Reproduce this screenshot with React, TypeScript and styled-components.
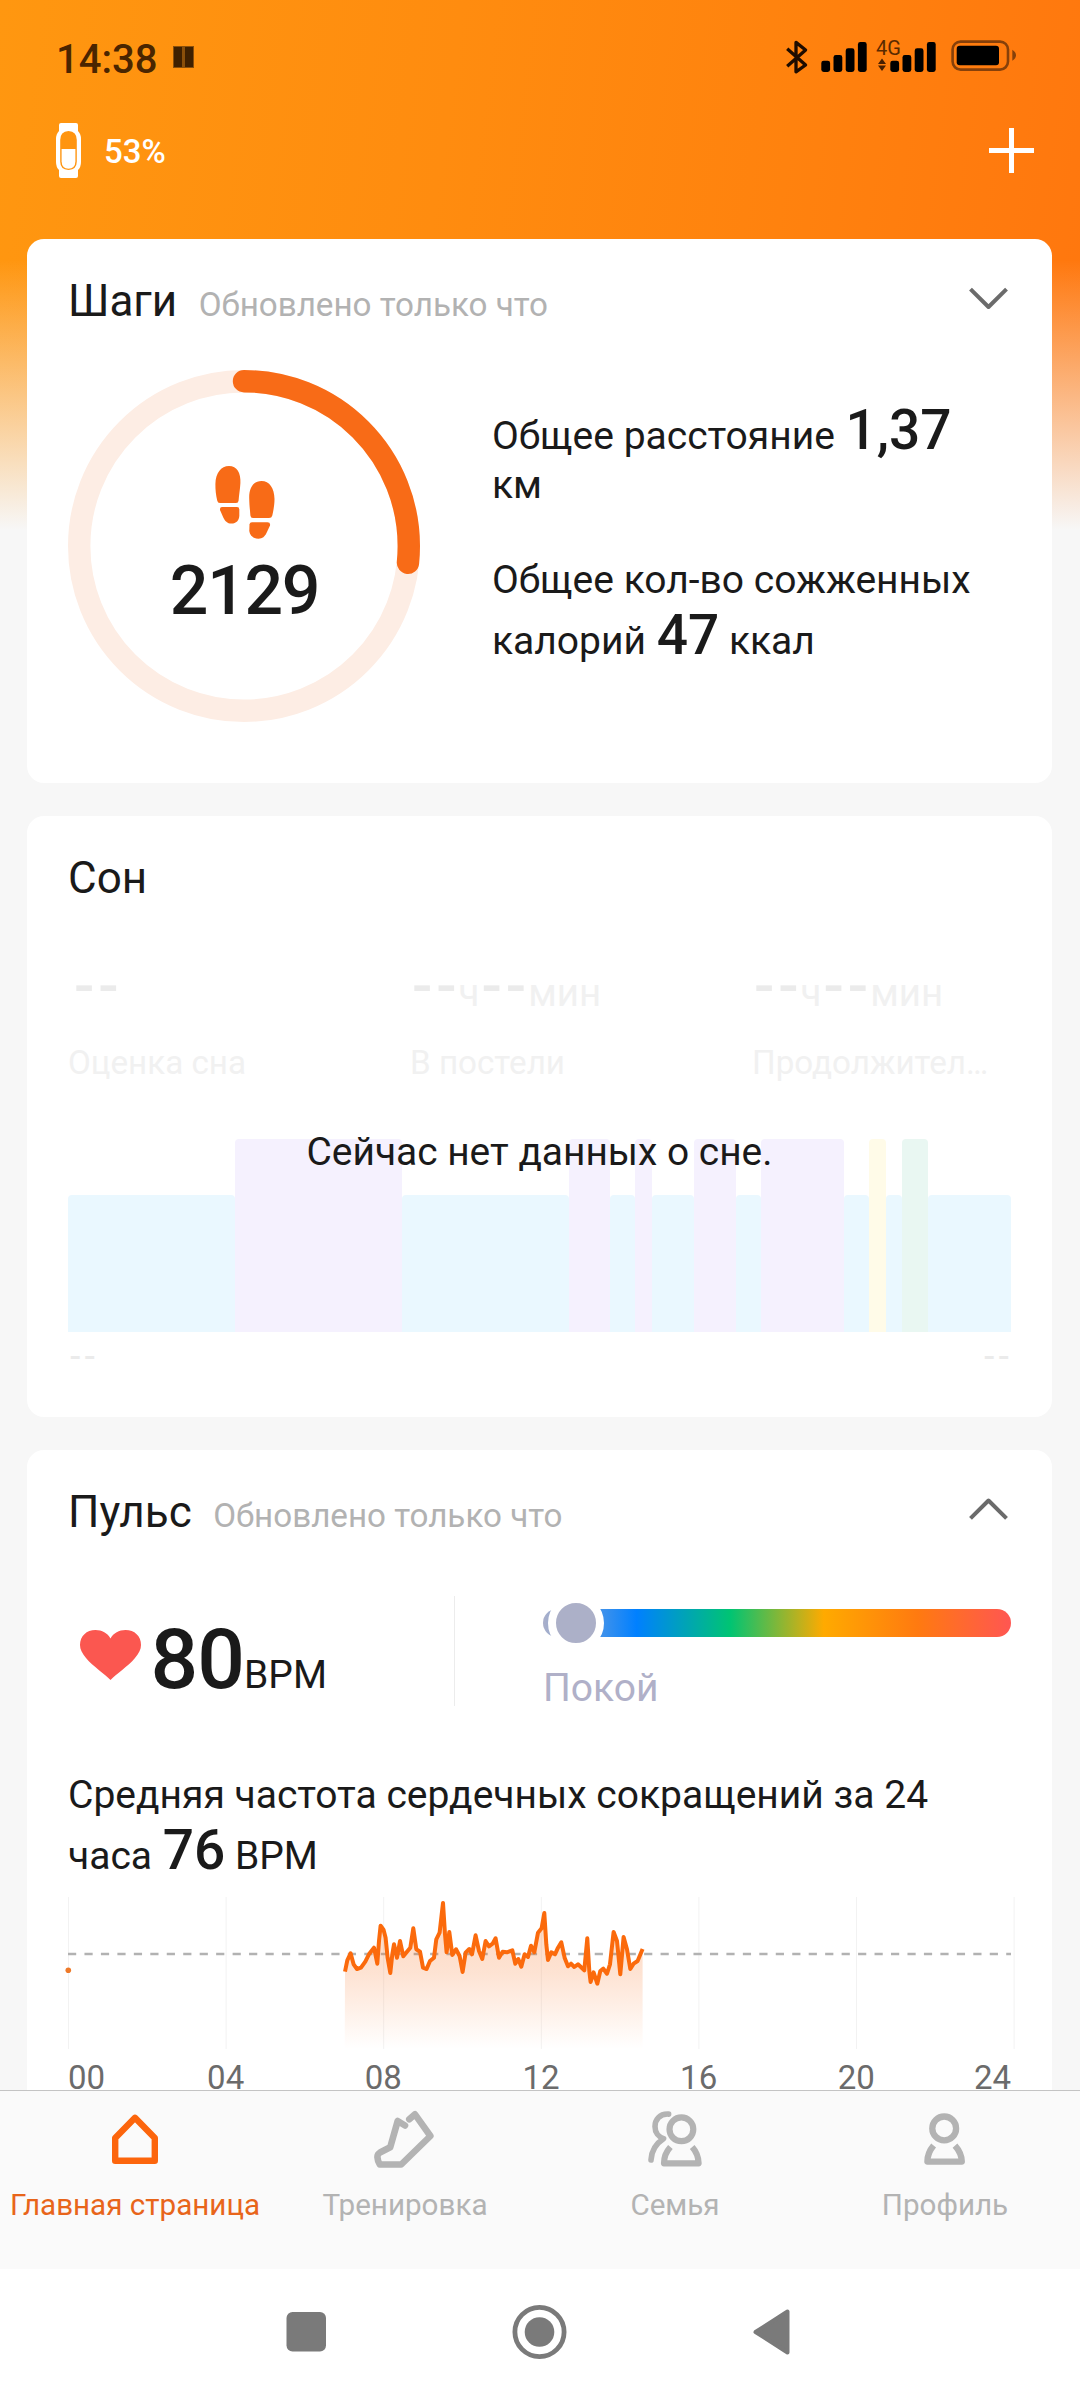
import React from 'react';
import styled, { createGlobalStyle } from 'styled-components';

const GlobalStyle = createGlobalStyle`
  *, *::before, *::after { box-sizing: border-box; }
  body { margin: 0; background: #f7f7f7; }
  svg { display: block; flex: none; overflow: visible; }
`;

const Screen = styled.div`
  width: 1080px;
  height: 2400px;
  display: flex;
  flex-direction: column;
  overflow: hidden;
  font-family: Roboto, 'Noto Sans', sans-serif;
  color: #1a1a1a;
  background:
    linear-gradient(180deg, rgba(247, 247, 247, 0) 260px, #f7f7f7 530px),
    linear-gradient(98deg, #ff9710 0, #ff8c0f 40%, #ff820e 70%, #ff760e 100%) 0 0 / 1080px 540px no-repeat;
`;

const StatusBar = styled.header`
  height: 116px;
  flex: none;
  display: flex;
  align-items: center;
  padding: 0 63px 0 56px;
`;

const Clock = styled.span`
  padding-top: 3px;
  font-size: 40px;
  font-weight: 500;
  line-height: 48px;
  color: #4a2500;
`;

const PauseMark = styled.div`
  display: flex;
  gap: 3px;
  margin: 0 0 2px 16px;
  padding: 1px;
  background: #8a4f0a;
`;

const PauseBar = styled.i`
  width: 8px;
  height: 20px;
  background: #3f2000;
`;

const StatusIcons = styled.div`
  display: flex;
  margin-left: auto;
`;

const BluetoothSlot = styled.div`
  margin-right: 13px;
`;

const Network = styled.div`
  position: relative;
  margin: 0 15px 0 9px;
`;

const NetworkType = styled.span`
  position: absolute;
  left: 0;
  top: -2px;
  font-size: 20px;
  line-height: 24px;
  font-weight: 400;
  color: #5a2a00;
`;

const ArrowSlot = styled.div`
  position: absolute;
  left: 1.5px;
  top: 20px;
`;

const DeviceBar = styled.div`
  height: 123px;
  flex: none;
  display: flex;
  align-items: center;
  justify-content: space-between;
  padding: 0 46px 54px 56px;
`;

const Device = styled.div`
  display: flex;
  align-items: center;
  gap: 23px;
  color: #fff;
`;

const DeviceCharge = styled.span`
  padding-top: 3px;
  font-size: 33px;
  font-weight: 500;
  line-height: 40px;
`;

const Feed = styled.main`
  flex: 1;
  min-height: 0;
  display: flex;
  flex-direction: column;
  gap: 33px;
  padding: 0 28px 0 27px;
`;

const Card = styled.section<{ $height: number; $flush?: boolean }>`
  flex: none;
  height: ${(p) => p.$height}px;
  padding: 32px 41px 0;
  border-radius: ${(p) => (p.$flush ? '17px 17px 0 0' : '17px')};
  background: #fff;
`;

const CardHeader = styled.div`
  height: 60px;
  display: flex;
  align-items: baseline;
  line-height: 60px;
`;

const CardTitle = styled.h2`
  margin: 0;
  font-size: 44px;
  font-weight: 400;
`;

const CardNote = styled.span`
  margin-left: 21.5px;
  font-size: 33.2px;
  color: #b2b2b2;
`;

const ChevronSlot = styled.div`
  align-self: flex-start;
  margin: 15px 3px 0 auto;
`;

const StepsBody = styled.div`
  display: flex;
  margin-top: 39px;
  gap: 72px;
`;

const Ring = styled.div`
  display: grid;
  flex: none;
  width: 352px;
  height: 352px;
  > * { grid-area: 1 / 1; }
`;

const RingContent = styled.div`
  display: flex;
  flex-direction: column;
  align-items: center;
  padding: 96px 0 0 1px;
`;

const StepCount = styled.span`
  margin-top: 12px;
  font-size: 68px;
  font-weight: 500;
  line-height: 80px;
  letter-spacing: -1.3px;
`;

const Metrics = styled.div`
  display: flex;
  flex-direction: column;
  gap: 49px;
  width: 490px;
  padding-top: 28px;
`;

const Metric = styled.p<{ $top?: number; $width?: number }>`
  margin: ${(p) => p.$top ?? 0}px 0 0;
  max-width: ${(p) => p.$width ?? 490}px;
  font-size: 39px;
`;

const Strong = styled.b`
  margin-left: 1px;
  font-size: 55px;
  font-weight: 500;
`;

const SleepStats = styled.div`
  display: grid;
  grid-template-columns: 342px 342px 259px;
  margin-top: 53px;
`;

const SleepValue = styled.div<{ $inset: number }>`
  display: flex;
  align-items: baseline;
  height: 56px;
  padding-left: ${(p) => p.$inset}px;
  font-size: 38.5px;
  line-height: 50px;
  color: #f1f1f1;
`;

const Dash = styled.span<{ $cell: number; $size: number }>`
  width: ${(p) => p.$cell}px;
  display: inline-flex;
  justify-content: center;
  font-size: ${(p) => p.$size}px;
  font-weight: 500;
  color: #ebebeb;
`;

const SleepLabel = styled.div`
  width: 238px;
  margin-top: 24px;
  white-space: nowrap;
  font-size: 33.2px;
  line-height: 44px;
  color: #f1f1f1;
`;

const SleepChart = styled.div`
  position: relative;
  display: flex;
  align-items: flex-end;
  height: 193px;
  margin-top: 54px;
`;

const SleepBar = styled.div<{ $units: number; $tone: string; $low: boolean }>`
  flex: ${(p) => p.$units} 0 0;
  height: ${(p) => (p.$low ? 137 : 193)}px;
  border-radius: 4px 4px 0 0;
  background: ${(p) => p.$tone};
`;

const SleepEmpty = styled.div`
  position: absolute;
  left: 0;
  right: 0;
  top: -13px;
  text-align: center;
  font-size: 38.9px;
  line-height: 52px;
`;

const SleepRange = styled.div`
  display: flex;
  justify-content: space-between;
  margin-top: 9px;
  line-height: 30px;
`;

const PulseRow = styled.div`
  display: flex;
  height: 110px;
  margin-top: 54px;
`;

const PulseNow = styled.div`
  display: flex;
  align-items: baseline;
  width: 387px;
  height: 110px;
  padding-left: 11.5px;
  border-right: 1px solid #ececec;
  font-size: 39px;
  line-height: 127px;
`;

const HeartSlot = styled.div`
  align-self: flex-start;
  margin: 34px 10px 0 0;
`;

const PulseValue = styled.span`
  font-size: 84px;
  font-weight: 500;
  letter-spacing: -1px;
`;

const Zone = styled.div`
  width: 468px;
  margin-left: 88px;
  padding-top: 13px;
`;

const ZoneTrack = styled.div`
  position: relative;
  height: 28px;
  border-radius: 14px;
  background: linear-gradient(90deg, #abb0ca 0, #0080ff 20%, #00c473 40%, #ffaa00 60%, #ff7a10 80%, #ff5652 100%);
`;

const ZoneKnob = styled.div`
  position: absolute;
  left: 5px;
  top: -14px;
  width: 56px;
  height: 56px;
  border: 8px solid #fff;
  border-radius: 50%;
  background: #acb0c8;
`;

const ZoneName = styled.div`
  margin-top: 26px;
  font-size: 39px;
  line-height: 50px;
  color: #b0b0c8;
`;

const PulseChart = styled.div`
  margin-top: 15px;
`;

const HourAxis = styled.div`
  display: grid;
  grid-template-columns: 1fr repeat(5, 2fr) 1fr;
  width: 946px;
  margin-top: 15.5px;
  font-size: 33px;
  line-height: 26px;
  color: #6b6b6b;
`;

const Hour = styled.span<{ $edge?: 'left' | 'right' }>`
  text-align: ${(p) => p.$edge ?? 'center'};
  ${(p) => (p.$edge === 'right' ? 'padding-right: 3px;' : '')}
`;

const TabBar = styled.nav`
  flex: none;
  height: 179px;
  display: grid;
  grid-template-columns: repeat(4, 1fr);
  padding-top: 16px;
  border-top: 1px solid #c4c4c4;
  background: #fafafa;
`;

const Tab = styled.div<{ $active?: boolean }>`
  display: flex;
  flex-direction: column;
  align-items: center;
  gap: 16px;
  font-size: 29.6px;
  line-height: 36px;
  white-space: nowrap;
  color: ${(p) => (p.$active ? '#e8651a' : '#b3b3b3')};
`;

const SystemNav = styled.footer`
  flex: none;
  height: 131px;
  display: flex;
  align-items: center;
  padding: 0 290px 5px 286px;
  justify-content: space-between;
  background: #fff;
`;

const BAR_TOPS = [22.7, 17, 10.3, 4];

const SignalBars = ({ offset = 0 }: { offset?: number }) => (
  <svg width={46 + offset} height="40" fill="#000">
    {BAR_TOPS.map((y, i) => (
      <rect key={i} x={offset + 0.3 + i * 12.2} y={y} width="8.8" height={34 - y} rx="2.4" />
    ))}
  </svg>
);

const Bluetooth = () => (
  <svg width="22" height="40" fill="none" stroke="#1d0c00" strokeWidth="3.3" strokeLinejoin="round">
    <path d="M1.2 10.8 L19.6 27 L10 33.8 V4.4 L19.6 12 L1.2 28.2" />
  </svg>
);

const NetworkArrows = () => (
  <ArrowSlot>
    <svg width="8" height="14" fill="#4a2000">
      <path d="M4 0.5 L8 6 H0 Z M4 13 L8 7.5 H0 Z" />
    </svg>
  </ArrowSlot>
);

const Battery = () => (
  <svg width="66" height="40">
    <rect x="1.6" y="3.6" width="55.4" height="28" rx="8" fill="none" stroke="#86400a" strokeWidth="2.6" />
    <rect x="5.7" y="7.7" width="42.3" height="19.6" rx="3" fill="#000" />
    <path d="M61.3 11.7 Q65 14 65 17.2 Q65 20.5 61.3 22.7 Z" fill="#86400a" />
  </svg>
);

const Band = () => (
  <svg width="25" height="55">
    <path
      fill="#fff"
      fillRule="evenodd"
      d="M5 0 H20 Q22 0 22 2 V8 Q25 11 25 16 V39 Q25 44 22 47 V53 Q22 55 20 55 H5 Q3 55 3 53 V47 Q0 44 0 39 V16 Q0 11 3 8 V2 Q3 0 5 0 Z
         M12.5 8 Q4.2 8.6 4.2 17 V38.5 Q4.2 46.5 12.5 47 Q20.8 46.5 20.8 38.5 V17 Q20.8 8.6 12.5 8 Z"
    />
    <path fill="#fff" d="M5.6 26 H19.4 V38.5 Q19.2 45.4 12.5 45.8 Q5.8 45.4 5.6 38.5 Z" />
  </svg>
);

const Plus = () => (
  <svg width="45" height="45" stroke="#fff" strokeWidth="5">
    <path d="M22.5 0 V45 M0 22.5 H45" />
  </svg>
);

const Chevron = ({ up = false }: { up?: boolean }) => (
  <svg width="39" height="24" fill="none" stroke="#6b6b6b" strokeWidth="4">
    <path d={up ? 'M1.5 21.3 L19.5 3.5 L37.5 21.3' : 'M1.5 3.2 L19.5 21 L37.5 3.2'} strokeLinejoin="round" />
  </svg>
);

const RADIUS = 164.8;
const GOAL_SHARE = 2129 / 8000;

const ProgressRing = () => {
  const length = 2 * Math.PI * RADIUS;
  return (
    <svg width="352" height="352" fill="none" strokeWidth="22.4">
      <circle cx="176" cy="176" r={RADIUS} stroke="#fdede4" />
      <circle
        cx="176"
        cy="176"
        r={RADIUS}
        stroke="#f86b17"
        strokeLinecap="round"
        strokeDasharray={`${length * GOAL_SHARE} ${length}`}
        transform="rotate(-90 176 176)"
      />
    </svg>
  );
};

const Footprints = () => (
  <svg width="60" height="73" fill="#f86b17">
    <path d="M14 0 C22 0 26 7 25.4 17 C25 24 24 29 23.6 34.5 Q23.4 37 21 37 H5 Q2.6 37 2.2 34.5 C1 29 0.3 24 0.4 18 C0.6 7 6 0 14 0 Z" />
    <path d="M7 41 H22 Q24.3 41 24.3 43.4 V49.5 C24.3 54.5 21 57.6 16.5 57.6 C12 57.6 10 55 8.3 51.5 L5.2 44.5 Q4.3 41 7 41 Z" />
    <path d="M46.5 15 C38.5 15 34 22 34.2 32 C34.3 39 35 44 35.4 49.5 Q35.6 52 38 52 H54 Q56.7 52 57.3 49.5 C58.5 44 59.5 39 59.5 33 C59.3 22 54.5 15 46.5 15 Z" />
    <path d="M37 56.3 H52.5 Q55.6 56.3 55 59.5 L51.5 67 C49.8 70.5 47.5 72.7 43.5 72.7 C38.5 72.7 34.5 69.5 34.3 64.5 L34.5 58.5 Q34.7 56.3 37 56.3 Z" />
  </svg>
);

const Heart = () => (
  <svg width="61" height="50">
    <path
      fill="#fb5750"
      d="M30.5 50 C25 44 13 36.5 6 28 C2 23 0 19.5 0 15 C0 6 6.5 0 15.5 0 C22 0 27.5 3 30.5 8.5 C33.5 3 39 0 45.5 0 C54.5 0 61 6 61 15 C61 19.5 59 23 55 28 C48 36.5 36 44 30.5 50 Z"
    />
  </svg>
);

/* Heart rate samples in thirds of a pixel; HeartRateChart shifts them onto the 24 h grid */
const SAMPLES: [number, number][] = [
  [134, 272], [141, 238], [151, 217], [160, 250], [170, 264], [182, 260], [195, 242], [207, 218], [221, 200],
  [231, 248], [236, 180], [241, 134], [250, 147], [256, 170], [262, 230], [270, 276], [276, 220], [281, 190],
  [290, 230], [299, 180], [309, 226], [322, 210], [330, 200], [339, 142], [348, 205], [359, 212], [368, 260],
  [379, 264], [389, 240], [401, 230], [408, 175], [418, 155], [428, 66], [434, 160], [439, 214], [447, 153],
  [456, 222], [467, 205], [478, 225], [487, 273], [496, 215], [507, 204], [515, 220], [526, 163], [536, 210],
  [546, 234], [556, 180], [566, 196], [577, 188], [586, 172], [596, 230], [607, 212], [620, 214], [636, 208],
  [645, 248], [654, 234], [663, 257], [673, 220], [683, 228], [692, 194], [702, 214], [713, 155], [724, 142],
  [732, 96], [738, 190], [743, 237], [753, 214], [764, 220], [773, 200], [783, 184], [793, 230], [803, 256],
  [812, 248], [822, 258], [833, 250], [852, 268], [861, 172], [867, 270], [871, 303], [880, 274], [891, 308],
  [900, 270], [909, 263], [920, 278], [929, 250], [940, 153], [950, 180], [960, 280], [970, 168], [980, 205],
  [990, 264], [1000, 248], [1012, 240], [1027, 204],
];

const HeartRateChart = () => {
  const line = SAMPLES.map(([x, y]) => `${(x / 3 + 232.3).toFixed(1)} ${(y / 3 - 16).toFixed(1)}`).join(' L');
  return (
    <svg width="943" height="152" fill="none">
      <defs>
        <linearGradient id="pulseFill" x1="0" y1="0" x2="0" y2="152" gradientUnits="userSpaceOnUse">
          <stop offset="0" stopColor="#f86b17" stopOpacity="0.3" />
          <stop offset="0.5" stopColor="#f86b17" stopOpacity="0.19" />
          <stop offset="1" stopColor="#f86b17" stopOpacity="0" />
        </linearGradient>
      </defs>
      {[0, 1, 2, 3, 4, 5, 6].map((i) => (
        <path key={i} d={`M${0.5 + i * 157.6} 0 V152`} stroke="#f2f2f2" />
      ))}
      <path d="M0 57 H943" stroke="#b2b2b2" strokeWidth="2.6" strokeDasharray="8.2 8.26" />
      <path d={`M${line} V152 H276.7 Z`} fill="url(#pulseFill)" />
      <path d={`M${line}`} stroke="#fb6a0c" strokeWidth="4" strokeLinejoin="round" />
      <circle cx="0.3" cy="73.3" r="2.8" fill="#ee7a2a" />
    </svg>
  );
};

const HomeIcon = () => (
  <svg width="64" height="64" fill="none" stroke="#fc650c" strokeWidth="6.4" strokeLinejoin="round">
    <path d="M12.2 31 L32 10.8 L51.8 31 V53.7 H12.2 Z" />
  </svg>
);

const ShoeIcon = () => (
  <svg width="64" height="64" fill="none" stroke="#b3b3b3" strokeWidth="6.6" strokeLinejoin="round" strokeLinecap="round">
    <path d="M32 18.5 L24.7 14 L17.2 40.3 L7 45.5 Q4.4 47 4.4 50 Q4.6 54 6.8 57.5 H28.2 L57.4 29 L42 7.3 L36.3 12.3" />
  </svg>
);

const FamilyIcon = () => (
  <svg width="64" height="64" fill="none" stroke="#b3b3b3" strokeWidth="6.2" strokeLinejoin="round">
    <circle cx="38.4" cy="22.3" r="11.9" />
    <path d="M27.4 40 Q21 47 21 56.3 H55.6 Q55.4 47 49.2 40" />
    <path d="M25.6 7.1 C16.5 6.5 12 13 12 19.5 C12 25.5 15.5 30 20.6 31.6 C13 36.5 8.5 43 8 53" strokeWidth="5.6" strokeLinecap="round" />
  </svg>
);

const ProfileIcon = () => (
  <svg width="64" height="64" fill="none" stroke="#b3b3b3" strokeWidth="6.3" strokeLinejoin="round">
    <circle cx="31.2" cy="21.4" r="11.9" />
    <path d="M20.6 38.6 Q14.4 46 14.4 54.6 H48.8 Q48.6 46 42 38.6" />
  </svg>
);

const BLUE = '#eaf8ff';
const VIOLET = '#f5f1fe';
const SLEEP_PHASES: [number, string][] = [
  [20, BLUE], [20, VIOLET], [20, BLUE], [5, VIOLET], [3, BLUE], [2, VIOLET], [5, BLUE], [5, VIOLET],
  [3, BLUE], [10, VIOLET], [3, BLUE], [2, '#fffbe8'], [2, BLUE], [3, '#e9f7f2'], [10, BLUE],
];

const Dashes = ({ cell = 24.3, size = 60 }: { cell?: number; size?: number }) => (
  <span>
    <Dash $cell={cell} $size={size}>-</Dash>
    <Dash $cell={cell} $size={size}>-</Dash>
  </span>
);

const Duration = () => (
  <SleepValue $inset={0}>
    <Dashes />
    <span>ч</span>
    <Dashes />
    <span>мин</span>
  </SleepValue>
);

export default function App() {
  return (
    <Screen>
      <GlobalStyle />
      <StatusBar>
        <Clock>14:38</Clock>
        <PauseMark>
          <PauseBar />
          <PauseBar />
        </PauseMark>
        <StatusIcons>
          <BluetoothSlot><Bluetooth /></BluetoothSlot>
          <SignalBars />
          <Network>
            <NetworkType>4G</NetworkType>
            <SignalBars offset={14} />
            <NetworkArrows />
          </Network>
          <Battery />
        </StatusIcons>
      </StatusBar>

      <DeviceBar>
        <Device>
          <Band />
          <DeviceCharge>53%</DeviceCharge>
        </Device>
        <Plus />
      </DeviceBar>

      <Feed>
        <Card $height={544}>
          <CardHeader>
            <CardTitle>Шаги</CardTitle>
            <CardNote>Обновлено только что</CardNote>
            <ChevronSlot><Chevron /></ChevronSlot>
          </CardHeader>
          <StepsBody>
            <Ring>
              <ProgressRing />
              <RingContent>
                <Footprints />
                <StepCount>2129</StepCount>
              </RingContent>
            </Ring>
            <Metrics>
              <Metric>Общее расстояние <Strong>1,37</Strong> км</Metric>
              <Metric>Общее кол-во сожженных калорий <Strong>47</Strong> ккал</Metric>
            </Metrics>
          </StepsBody>
        </Card>

        <Card $height={601}>
          <CardHeader>
            <CardTitle>Сон</CardTitle>
          </CardHeader>
          <SleepStats>
            <div>
              <SleepValue $inset={4}><Dashes /></SleepValue>
              <SleepLabel>Оценка сна</SleepLabel>
            </div>
            <div>
              <Duration />
              <SleepLabel>В постели</SleepLabel>
            </div>
            <div>
              <Duration />
              <SleepLabel>Продолжител…</SleepLabel>
            </div>
          </SleepStats>
          <SleepChart>
            {SLEEP_PHASES.map(([units, tone], i) => (
              <SleepBar key={i} $units={units} $tone={tone} $low={tone === BLUE} />
            ))}
            <SleepEmpty>Сейчас нет данных о сне.</SleepEmpty>
          </SleepChart>
          <SleepRange>
            <Dashes cell={14.5} size={34} />
            <Dashes cell={14.5} size={34} />
          </SleepRange>
        </Card>

        <Card $height={640} $flush>
          <CardHeader>
            <CardTitle>Пульс</CardTitle>
            <CardNote>Обновлено только что</CardNote>
            <ChevronSlot><Chevron up /></ChevronSlot>
          </CardHeader>
          <PulseRow>
            <PulseNow>
              <HeartSlot><Heart /></HeartSlot>
              <PulseValue>80</PulseValue>
              <span>BPM</span>
            </PulseNow>
            <Zone>
              <ZoneTrack><ZoneKnob /></ZoneTrack>
              <ZoneName>Покой</ZoneName>
            </Zone>
          </PulseRow>
          <Metric $top={66} $width={920}>
            Средняя частота сердечных сокращений за 24 часа <Strong>76</Strong> BPM
          </Metric>
          <PulseChart>
            <HeartRateChart />
            <HourAxis>
              <Hour $edge="left">00</Hour>
              <Hour>04</Hour>
              <Hour>08</Hour>
              <Hour>12</Hour>
              <Hour>16</Hour>
              <Hour>20</Hour>
              <Hour $edge="right">24</Hour>
            </HourAxis>
          </PulseChart>
        </Card>
      </Feed>

      <TabBar>
        <Tab $active><HomeIcon /><span>Главная страница</span></Tab>
        <Tab><ShoeIcon /><span>Тренировка</span></Tab>
        <Tab><FamilyIcon /><span>Семья</span></Tab>
        <Tab><ProfileIcon /><span>Профиль</span></Tab>
      </TabBar>

      <SystemNav>
        <svg width="40" height="40"><rect x="0.5" width="39.5" height="39.5" rx="6" fill="#7a7a7a" /></svg>
        <svg width="54" height="54">
          <circle cx="26.5" cy="27" r="24.6" fill="none" stroke="#7a7a7a" strokeWidth="4.8" />
          <circle cx="26.5" cy="27" r="14.8" fill="#7a7a7a" />
        </svg>
        <svg width="37" height="46">
          <path d="M2.5 23 L34.5 2.5 V43.5 Z" fill="#7a7a7a" stroke="#7a7a7a" strokeWidth="4" strokeLinejoin="round" />
        </svg>
      </SystemNav>
    </Screen>
  );
}
